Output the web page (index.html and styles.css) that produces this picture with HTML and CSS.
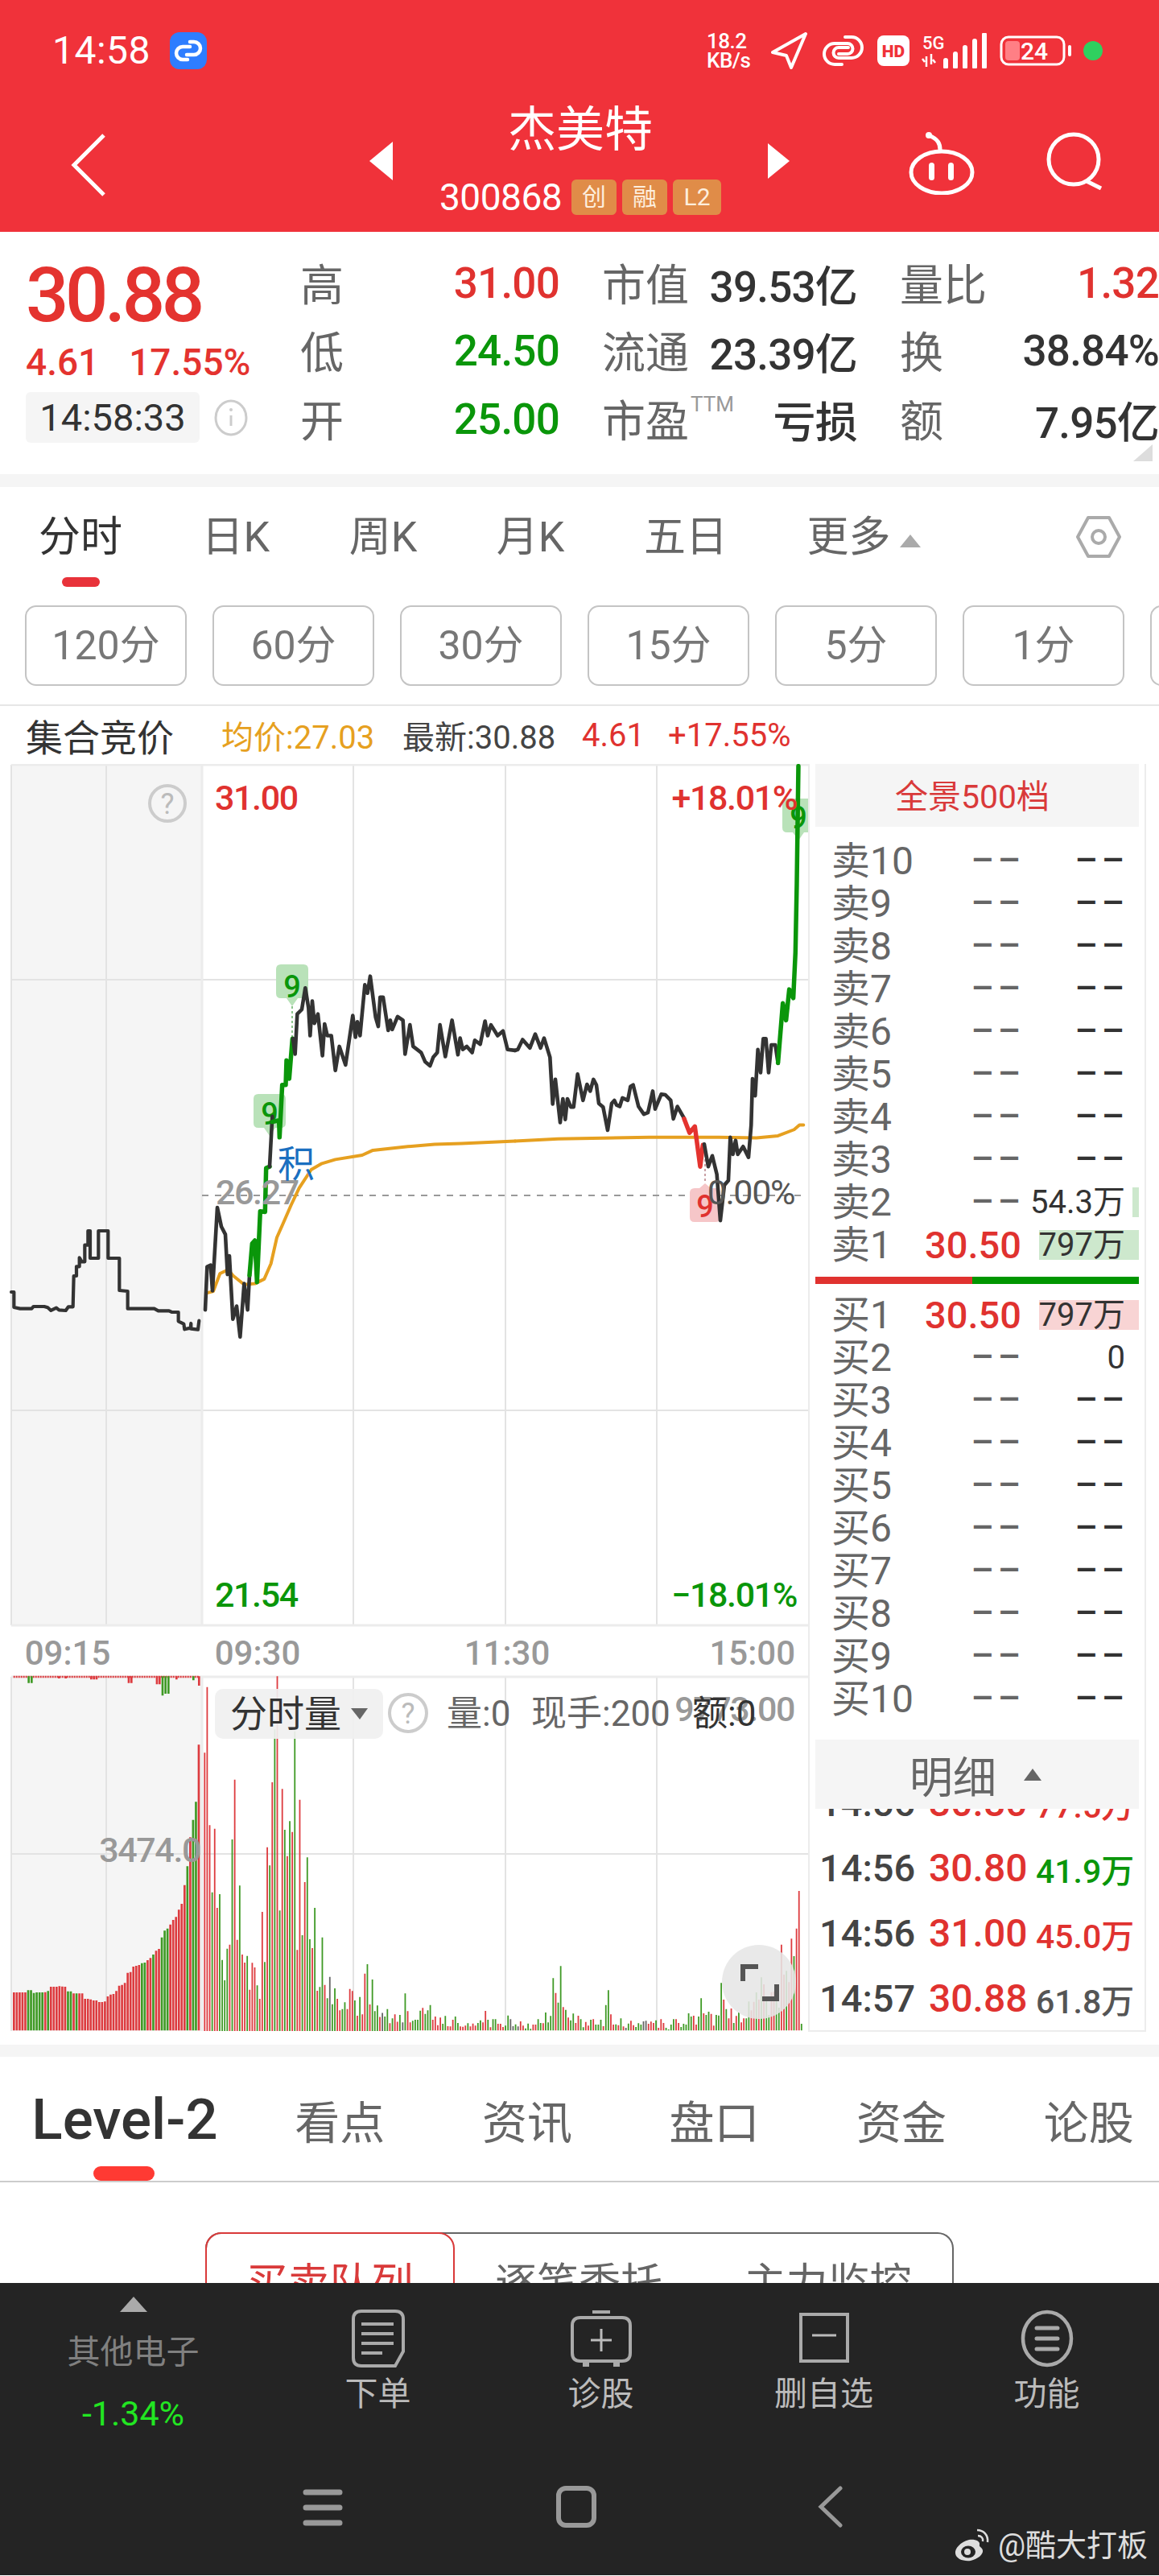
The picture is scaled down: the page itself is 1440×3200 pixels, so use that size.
FILE: index.html
```html
<!DOCTYPE html>
<html lang="zh-CN">
<head>
<meta charset="utf-8">
<title>杰美特 300868</title>
<link rel="stylesheet" href="styles.css">
</head>
<body>
<div class="page">
  <header class="header">
    <div class="status">
      <span class="clock">14:58</span>
      <svg class="notif" width="46" height="46" viewBox="0 0 46 46"><rect width="46" height="46" rx="12" fill="#2e7dff"/><path d="M25 12h5a8 8 0 0 1 0 16h-9M22 34h-6a8 8 0 0 1 0-16h9" fill="none" stroke="#fff" stroke-width="4.5" stroke-linecap="round"/></svg>
      <div class="status-right">
        <div class="speed"><span>18.2</span><span>KB/s</span></div>
        <svg width="48" height="46" viewBox="0 0 48 46"><path d="M44 2 3 25l17 4 6 15z" fill="none" stroke="#fff" stroke-width="4" stroke-linejoin="round"/></svg>
        <svg width="55" height="42" viewBox="0 0 55 42"><path d="M30 4h8a13 13 0 0 1 0 26H22a6 6 0 0 1 0-13h12M26 38h-9a13 13 0 0 1 0-26h16a6 6 0 0 1 0 13H22" fill="none" stroke="#fff" stroke-width="4" stroke-linecap="round"/></svg>
        <svg width="40" height="38" viewBox="0 0 40 38"><rect width="40" height="38" rx="8" fill="#fff"/><text x="20" y="27" class="hd-text">HD</text></svg>
        <svg width="82" height="44" viewBox="0 0 82 44"><text x="1" y="20" class="net-text">5G</text><path d="M6 29v13M4 36l-3-4M12 26v13M14 33l3 4" fill="none" stroke="#fff" stroke-width="2.5"/><path d="M26 42v-8M38 42V26M50 42V18M62 42V10M74 42V2" stroke="#fff" stroke-width="6" stroke-linecap="round" transform="translate(4 0)"/></svg>
        <svg width="93" height="38" viewBox="0 0 93 38"><rect x="2" y="2" width="78" height="34" rx="9" fill="none" stroke="#fff" stroke-width="3"/><rect x="7" y="7" width="18" height="24" rx="4" fill="#ff7f85"/><text x="43" y="30" class="bat-text">24</text><rect x="85" y="12" width="4" height="14" rx="2" fill="#fff"/></svg>
        <span class="dot"></span>
      </div>
    </div>
    <nav class="nav">
      <svg class="nav-back" width="44" height="78" viewBox="0 0 44 78"><path d="M41 2 4 39l37 37" fill="none" stroke="#fff" stroke-width="5" stroke-linejoin="miter"/></svg>
      <div class="nav-center">
        <span class="tri-left"></span>
        <div class="nav-title">
          <div class="name">杰美特</div>
          <div class="code-row"><span class="code">300868</span><span class="tag">创</span><span class="tag">融</span><span class="tag tag-wide">L2</span></div>
        </div>
        <span class="tri-right"></span>
      </div>
      <div class="nav-actions">
        <svg width="84" height="78" viewBox="0 0 84 78"><ellipse cx="42" cy="50" rx="38" ry="26" fill="none" stroke="#fff" stroke-width="5"/><path d="M40 22c0-7-2-13-14-18" fill="none" stroke="#fff" stroke-width="5" stroke-linecap="round"/><circle cx="26" cy="4" r="4" fill="#fff"/><rect x="26" y="38" width="7" height="22" rx="3.5" fill="#fff"/><rect x="50" y="38" width="7" height="22" rx="3.5" fill="#fff"/></svg>
        <svg width="70" height="72" viewBox="0 0 70 72"><circle cx="34" cy="34" r="31" fill="none" stroke="#fff" stroke-width="5"/><path d="M50 61l18 9" fill="none" stroke="#fff" stroke-width="5"/></svg>
      </div>
    </nav>
  </header>

  <section class="quote">
    <div class="quote-main">
      <div class="price">30.88</div>
      <div class="change"><span>4.61</span><span>17.55%</span></div>
      <div class="time-row"><span class="time-chip">14:58:33</span>
        <svg width="42" height="46" viewBox="0 0 42 46"><ellipse cx="21" cy="23" rx="19" ry="21" fill="none" stroke="#ccc" stroke-width="3"/><path d="M21 20v13" stroke="#ccc" stroke-width="3"/><circle cx="21" cy="13" r="2" fill="#ccc"/></svg>
      </div>
    </div>
    <div class="quote-grid">
      <div class="cell"><span class="lb">高</span><span class="v up">31.00</span></div>
      <div class="cell"><span class="lb">市值</span><span class="v dk">39.53亿</span></div>
      <div class="cell"><span class="lb">量比</span><span class="v up">1.32</span></div>
      <div class="cell"><span class="lb">低</span><span class="v dn">24.50</span></div>
      <div class="cell"><span class="lb">流通</span><span class="v dk">23.39亿</span></div>
      <div class="cell"><span class="lb">换</span><span class="v dk">38.84%</span></div>
      <div class="cell"><span class="lb">开</span><span class="v dn">25.00</span></div>
      <div class="cell"><span class="lb">市盈<sup class="ttm">TTM</sup></span><span class="v dk">亏损</span></div>
      <div class="cell"><span class="lb">额</span><span class="v dk">7.95亿</span></div>
    </div>
    <span class="corner"></span>
  </section>
  <div class="gap-bar"></div>

  <section class="period">
    <div class="period-tabs">
      <span class="ptab active">分时</span><span class="ptab">日K</span><span class="ptab">周K</span><span class="ptab">月K</span><span class="ptab">五日</span><span class="ptab">更多<i class="up-tri"></i></span>
      <svg class="hex" width="56" height="54" viewBox="0 0 56 54"><path d="M15 3h26l13 24-13 24H15L2 27z" fill="none" stroke="#aaa" stroke-width="4" stroke-linejoin="round"/><circle cx="28" cy="27" r="8" fill="none" stroke="#aaa" stroke-width="4"/></svg>
    </div>
    <div class="min-btns">
      <span class="mbtn">120分</span><span class="mbtn">60分</span><span class="mbtn">30分</span><span class="mbtn">15分</span><span class="mbtn">5分</span><span class="mbtn">1分</span><span class="mbtn"></span>
    </div>
  </section>

  <div class="info-line">
    <span class="il-title">集合竞价</span>
    <span class="il-avg">均价:27.03</span>
    <span class="il-new">最新:30.88</span>
    <span class="il-up il-a">4.61</span>
    <span class="il-up il-b">+17.55%</span>
  </div>

  <section class="market">
    <svg class="chart" width="1004" height="1580" viewBox="0 950 1004 1580">
      <rect x="14" y="951" width="237" height="1069" fill="#f5f5f5"/>
      <rect x="14" y="2084" width="237" height="440" fill="#f5f5f5"/>
      <path class="grid" d="M14 1218H1004M14 1753H1004M14 2304H1004M132 951V2020M439 951V2020M628 951V2020M816 951V2020M132 2084V2524M439 2084V2524M628 2084V2524M816 2084V2524M14 951V2020M14 2084V2524"/>
      <path class="grid-strong" d="M14 951H1004M14 2020H1004M14 2084H1004M251 951V2020M251 2084V2524"/>
      <path class="dash" d="M251 1486H1000"/>

      <path class="tag-g" d="M349 1199h28q6 0 6 6v30q0 6-6 6h-7l-7 10-7-10h-7q-6 0-6-6v-30q0-6 6-6z"/>
      <path class="tag-g" d="M321 1360h28q6 0 6 6v30q0 6-6 6h-7l-7 10-7-10h-7q-6 0-6-6v-30q0-6 6-6z"/>
      <path class="tag-g" d="M978 993h28q6 0 6 6v30q0 6-6 6h-7l-7 10-7-10h-7q-6 0-6-6v-30q0-6 6-6z"/>
      <path class="tag-r" d="M863 1519h26q6 0 6-6v-30q0-6-6-6h-6l-7-6-7 6h-6q-6 0-6 6v30q0 6 6 6z"/>
      <path class="dots-g" d="M363 1251V1292"/>
      <path class="dots-r" d="M876 1429V1471"/>
      <text x="363" y="1240" class="nine g">9</text>
      <text x="335" y="1398" class="nine g">9</text>
      <text x="992" y="1030" class="nine g">9</text>
      <text x="876" y="1513" class="nine r">9</text>

      <g transform="translate(0 1480) scale(.3333)">
        <polyline class="ln blk th" points="42,378 52,378 52,435 75,440 118,440 125,432 165,432 178,436 190,447 210,437 220,445 245,447 255,433 272,433 275,318 285,318 285,283 296,283 296,250 305,265 316,265 316,203 328,203 328,150 336,150 336,252 367,252 367,150 403,150 403,252 445,252 445,372 476,375 476,440 575,440 590,448 630,448 640,453 665,453 665,487 685,497 688,517 710,512 712,495 712,515 738,518 742,485"/>
      </g>
      <g transform="translate(240 1100) scale(.3333 .3827)">
        <polyline class="ln org" points="52,1325 75,1320 100,1262 130,1250 150,1270 190,1298 230,1295 265,1280 290,1230 312,1145 335,1100 365,1040 395,985 440,925 480,905 530,892 630,878 670,862 800,850 900,843 1000,840 1200,832"/>
        <polyline class="ln blk" points="45,1380 52,1240 65,1235 72,1318 90,1048 105,1110 120,1135 128,1265 135,1205 148,1410 162,1368 175,1468 190,1295 203,1380 210,1268"/>
        <polyline class="ln grn" points="210,1268 220,1165 230,1155 238,1290 250,1060 268,1062 272,920 285,915"/>
        <polyline class="ln blk" points="285,915 295,752"/>
        <polyline class="ln grn" points="295,770 320,765 322,820 332,650 345,650 348,570 358,630 370,500"/>
        <polyline class="ln blk" points="372,500 380,550 388,420 405,405 418,335 430,400 436,490 444,378 452,450 465,420 482,555 490,452 500,490 515,490 530,603 545,525 568,585 595,425 605,495 612,445 622,490 640,325 650,352 660,297 680,430 690,460 697,365 708,365 727,473 735,440 742,470 762,428 782,440 790,550 808,455 820,525 850,545 865,575 883,588 895,560 910,545 920,455 940,558 965,440 987,552 995,498 1005,535 1020,525 1040,545 1050,505 1070,518 1088,443 1098,490 1110,455 1135,490 1155,475 1172,535 1200,538"/>
      </g>
      <g transform="translate(640 1100) scale(.3333 .3827)">
        <polyline class="ln org" points="0,832 160,825 500,820 760,820 900,822 980,815 1040,795 1060,780 1075,780"/>
        <polyline class="ln blk" points="0,538 10,535 28,503 55,530 75,485 95,530 108,498 130,560 140,712 150,632 168,772 178,695 187,762 195,695 208,722 218,722 233,615 253,700 268,648 280,670 292,632 303,650 312,710 328,722 345,797 360,710 370,700 378,715 390,720 400,692 420,700 430,655 440,650 460,720 480,745 495,740 513,670 522,728 545,680 560,682 580,700 590,760 605,720 630,758"/>
        <polyline class="ln red" points="630,760 650,805 670,785 690,915 700,845"/>
        <polyline class="ln blk" points="705,842 720,915 735,880 752,940 765,1090 780,975 795,960 802,820 812,875 822,830 830,875 850,850 870,885 880,780 885,630 895,685 905,535 915,610 925,500 935,500 945,610 955,520 970,520 980,580"/>
        <polyline class="ln grn" points="980,578 998,385 1010,440 1022,340 1037,368 1045,220 1050,0 1056,-385"/>
      </g>

      <text x="267" y="1007" class="lbl up">31.00</text>
      <text x="990" y="1007" class="lbl up end">+18.01%</text>
      <text x="267" y="1997" class="lbl dn">21.54</text>
      <text x="990" y="1997" class="lbl dn end">−18.01%</text>
      <text x="268" y="1497" class="lbl mute">26.27</text>
      <text x="987" y="1497" class="lbl mid end">0.00%</text>
      <text x="345" y="1463" class="ji">积</text>
      <ellipse cx="208" cy="999" rx="22" ry="22" class="q"/>
      <text x="208" y="1012" class="q-text">?</text>

      <text x="84" y="2069" class="tm mid-a">09:15</text>
      <text x="320" y="2069" class="tm mid-a">09:30</text>
      <text x="630" y="2069" class="tm mid-a">11:30</text>
      <text x="988" y="2069" class="tm end">15:00</text>

      <g id="bars-a" transform="translate(10 2080) scale(.3333)">
        <path class="hang-r" d="M20 12H710" stroke-dasharray="6 3"/>
        <path class="hang-r" d="M190 10V18M215 10V18M310 10V22M320 10V22M330 10V22M450 10V35M460 10V35M555 10V40M565 10V40M628 10V22M712 10V45"/>
        <path class="hang-g" d="M77 10V35M88 10V35M576 10V82M587 10V75M598 10V75M691 10V25"/>
      </g>
      <g id="bars-b" transform="translate(500 2300) scale(.3333)"></g>

      <text x="987" y="2139" class="lbl mute end">9773.00</text>
      <text x="249" y="2314" class="lbl mute end">3474.0</text>
      <rect x="267" y="2099" width="209" height="62" rx="10" class="vol-chip"/>
      <text x="286" y="2146" class="vol-title">分时量</text>
      <path d="M436 2123h21l-10 14z" fill="#666"/>
      <ellipse cx="507" cy="2129" rx="23" ry="23" class="q"/>
      <text x="507" y="2142" class="q-text">?</text>
      <text x="555" y="2145" class="vol-info">量:0</text>
      <text x="660" y="2145" class="vol-info">现手:200</text>
      <text x="860" y="2145" class="vol-info dk">额:0</text>
      <circle cx="943" cy="2463" r="46" class="fs"/>
      <path class="fs-ic" d="M923 2462v-18h19M965 2466v18h-18"/>
    </svg>

    <aside class="book">
      <div class="book-head">全景500档</div>
      <div class="book-rows">
        <div class="row"><span class="rl">卖10</span><span class="rp">––</span><span class="rv dash-v">––</span></div>
        <div class="row"><span class="rl">卖9</span><span class="rp">––</span><span class="rv dash-v">––</span></div>
        <div class="row"><span class="rl">卖8</span><span class="rp">––</span><span class="rv dash-v">––</span></div>
        <div class="row"><span class="rl">卖7</span><span class="rp">––</span><span class="rv dash-v">––</span></div>
        <div class="row"><span class="rl">卖6</span><span class="rp">––</span><span class="rv dash-v">––</span></div>
        <div class="row"><span class="rl">卖5</span><span class="rp">––</span><span class="rv dash-v">––</span></div>
        <div class="row"><span class="rl">卖4</span><span class="rp">––</span><span class="rv dash-v">––</span></div>
        <div class="row"><span class="rl">卖3</span><span class="rp">––</span><span class="rv dash-v">––</span></div>
        <div class="row"><i class="depth ask" style="width:8px"></i><span class="rl">卖2</span><span class="rp">––</span><span class="rv">54.3万</span></div>
        <div class="row"><i class="depth ask" style="width:124px"></i><span class="rl">卖1</span><span class="rp price-v">30.50</span><span class="rv">797万</span></div>
      </div>
      <div class="ratio"><i class="ratio-r"></i><i class="ratio-g"></i></div>
      <div class="book-rows buys">
        <div class="row"><i class="depth bid" style="width:124px"></i><span class="rl">买1</span><span class="rp price-v">30.50</span><span class="rv">797万</span></div>
        <div class="row"><span class="rl">买2</span><span class="rp">––</span><span class="rv">0</span></div>
        <div class="row"><span class="rl">买3</span><span class="rp">––</span><span class="rv dash-v">––</span></div>
        <div class="row"><span class="rl">买4</span><span class="rp">––</span><span class="rv dash-v">––</span></div>
        <div class="row"><span class="rl">买5</span><span class="rp">––</span><span class="rv dash-v">––</span></div>
        <div class="row"><span class="rl">买6</span><span class="rp">––</span><span class="rv dash-v">––</span></div>
        <div class="row"><span class="rl">买7</span><span class="rp">––</span><span class="rv dash-v">––</span></div>
        <div class="row"><span class="rl">买8</span><span class="rp">––</span><span class="rv dash-v">––</span></div>
        <div class="row"><span class="rl">买9</span><span class="rp">––</span><span class="rv dash-v">––</span></div>
        <div class="row"><span class="rl">买10</span><span class="rp">––</span><span class="rv dash-v">––</span></div>
      </div>
      <div class="detail-head"><span>明细</span><i class="detail-tri"></i></div>
      <div class="details">
        <div class="drow"><span class="dt">14:56</span><span class="dp">30.80</span><span class="dv up">77.5万</span></div>
        <div class="drow"><span class="dt">14:56</span><span class="dp">30.80</span><span class="dv dn">41.9万</span></div>
        <div class="drow"><span class="dt">14:56</span><span class="dp">31.00</span><span class="dv up">45.0万</span></div>
        <div class="drow"><span class="dt">14:57</span><span class="dp">30.88</span><span class="dv gr">61.8万</span></div>
      </div>
    </aside>
  </section>
  <div class="gap-bar gap-low"></div>

  <div class="bottom-tabs">
    <span class="btab lead">Level-2</span><span class="btab">看点</span><span class="btab">资讯</span><span class="btab">盘口</span><span class="btab">资金</span><span class="btab">论股</span>
  </div>
  <div class="seg-wrap">
    <div class="seg">
      <span class="seg-item on">买卖队列</span><span class="seg-item">逐笔委托</span><span class="seg-item">主力监控</span>
    </div>
  </div>

  <footer class="footer">
    <div class="actions">
      <div class="sector"><i class="sector-tri"></i><span class="sector-name">其他电子</span><span class="sector-pct">-1.34%</span></div>
      <div class="act">
        <svg width="66" height="72" viewBox="0 0 66 72"><path d="M12 2h42q10 0 10 10v40l-10 18H12Q2 70 2 60V12Q2 2 12 2z" fill="none" stroke="#aaa" stroke-width="4"/><path d="M12 18h40M12 30h40M12 42h40M12 54h26" stroke="#aaa" stroke-width="4"/></svg>
        <span>下单</span></div>
      <div class="act">
        <svg width="78" height="72" viewBox="0 0 78 72"><path d="M28 3h22M13 10h52q10 0 10 10v34q0 10-10 10H13Q3 64 3 54V20q0-10 10-10z" fill="none" stroke="#aaa" stroke-width="4"/><path d="M39 24v28M26 38h26" stroke="#bbb" stroke-width="3"/><path d="M16 66h8v5h-8zM54 66h8v5h-8z" fill="#aaa"/></svg>
        <span>诊股</span></div>
      <div class="act">
        <svg width="62" height="72" viewBox="0 0 62 72"><rect x="2" y="6" width="58" height="58" fill="none" stroke="#aaa" stroke-width="4"/><path d="M16 32h30" stroke="#bbb" stroke-width="3"/></svg>
        <span>删自选</span></div>
      <div class="act">
        <svg width="66" height="72" viewBox="0 0 66 72"><ellipse cx="33" cy="36" rx="30" ry="33" fill="none" stroke="#aaa" stroke-width="4.5"/><path d="M20 23h26M20 36h26M20 49h26" stroke="#aaa" stroke-width="5" stroke-linecap="round"/></svg>
        <span>功能</span></div>
    </div>
    <div class="sys-nav">
      <svg width="50" height="52" viewBox="0 0 50 52"><path d="M4 8h42M4 27h42M4 46h42" stroke="#999" stroke-width="7" stroke-linecap="round"/></svg>
      <svg width="52" height="52" viewBox="0 0 52 52"><rect x="4" y="3" width="44" height="46" rx="9" fill="none" stroke="#999" stroke-width="6"/></svg>
      <svg width="50" height="52" viewBox="0 0 50 52"><path d="M38 3 14 26l24 23" fill="none" stroke="#999" stroke-width="5" stroke-linecap="round"/></svg>
    </div>
    <div class="mark">
      <svg width="48" height="42" viewBox="0 0 48 42"><path d="M20 14C9 17 2 25 3 31c1 7 10 10 19 9 9-2 16-8 15-13-1-4-5-4-4-7 1-4-5-7-13-6z" fill="#ddd"/><ellipse cx="19" cy="29" rx="9" ry="7.5" fill="#242424"/><circle cx="18" cy="29" r="4" fill="#ddd"/><path d="M30 2c8 0 14 6 13 15M31 9c4 0 7 3 6 7" fill="none" stroke="#ddd" stroke-width="2.5"/></svg>
      <span>@酷大打板</span>
    </div>
  </footer>
</div>
<script src="script.js"></script>
</body>
</html>
```
FILE: styles.css
```css
* { box-sizing: border-box; }
html, body { margin: 0; padding: 0; background: #fff; }
body { font-family: Roboto, "Noto Sans CJK SC", sans-serif; color: #333; }
i { display: block; font-style: normal; }
.page { width: 1440px; height: 3200px; overflow: hidden; position: relative; }

.header { height: 288px; background: #f0323a; color: #fff; }
.status { height: 122px; padding: 40px 70px 0 65px; display: flex; align-items: flex-start; }
.clock { font-size: 48px; line-height: 46px; letter-spacing: .5px; }
.notif { margin-left: 24px; }
.status-right { margin-left: auto; display: flex; align-items: center; height: 46px; }
.speed { width: 64px; display: flex; flex-direction: column; font-size: 26px; line-height: 24px; font-weight: 500; white-space: nowrap; letter-spacing: -.5px; }
.status-right svg { margin-left: 15px; flex: none; }
.hd-text { font-size: 21px; font-weight: 900; fill: #f0323a; text-anchor: middle; }
.net-text { font-size: 22px; font-weight: 500; fill: #fff; }
.bat-text { font-size: 30px; fill: #fff; text-anchor: middle; font-weight: 500; }
.dot { width: 24px; height: 24px; border-radius: 50%; background: #2fd05f; margin-left: 11px; flex: none; }

.nav { height: 166px; padding: 10px 70px 0; display: grid; grid-template-columns: 1fr auto 1fr; align-items: start; }
.nav-back { margin: 34px 0 0 18px; }
.nav-center { display: flex; align-items: center; gap: 58px; }
.tri-left { width: 0; height: 0; border: solid transparent; border-width: 24px 29px 24px 0; border-right-color: #fff; }
.tri-right { width: 0; height: 0; border: solid transparent; border-width: 22px 0 22px 27px; border-left-color: #fff; }
.nav-title { width: 350px; text-align: center; }
.name { font-size: 60px; line-height: 60px; }
.code-row { margin-top: 31px; height: 44px; display: flex; align-items: center; gap: 7px; }
.code { font-size: 46px; line-height: 44px; width: 157px; text-align: left; letter-spacing: -.5px; }
.tag { width: 56px; height: 44px; border-radius: 6px; background: #e08c48; color: #fdeedd; font-size: 30px; line-height: 44px; text-align: center; }
.tag-wide { width: 60px; }
.nav-actions { display: flex; justify-content: flex-end; align-items: flex-start; gap: 88px; margin-top: 32px; }

.quote { height: 301px; display: flex; position: relative; }
.quote-main { width: 373px; padding: 36px 0 0 32px; flex: none; }
.price { font-size: 94px; line-height: 86px; font-weight: 500; letter-spacing: -4.4px; color: #e4332f; }
.change { margin-top: 18px; display: flex; gap: 37px; font-size: 46px; line-height: 44px; color: #e4332f; font-weight: 500; }
.time-row { margin-top: 15px; display: flex; align-items: center; gap: 18px; }
.time-chip { width: 216px; height: 63px; background: #f5f5f5; border-radius: 6px; font-size: 47px; line-height: 63px; text-align: center; color: #333; }
.quote-grid { flex: 1; padding-top: 20px; display: grid; grid-template-columns: 322px 317px 322px; column-gap: 53px; grid-auto-rows: 84.5px; }
.cell { display: flex; justify-content: space-between; align-items: center; white-space: nowrap; }
.lb { font-size: 54px; color: #666; position: relative; }
.ttm { font-size: 26px; vertical-align: top; line-height: 44px; color: #999; margin-left: 2px; }
.v { font-size: 53px; font-weight: 500; letter-spacing: -.8px; padding-top: 3px; }
.up { color: #e0322f; fill: #e0322f; }
.dn { color: #0a960a; fill: #0a960a; }
.dk { color: #333; fill: #333; }
.gr { color: #555; }
.corner { position: absolute; right: 8px; bottom: 16px; width: 0; height: 0; border: solid transparent; border-width: 0 0 21px 24px; border-bottom-color: #ddd; }
.gap-bar { height: 16px; background: #f5f5f5; }
.gap-low { height: 15px; margin-top: 11px; }

.period-tabs { height: 147px; padding-left: 48px; display: flex; align-items: flex-start; gap: 98.5px; position: relative; }
.ptab { font-size: 52px; line-height: 60px; margin-top: 33px; color: #666; position: relative; display: flex; align-items: center; white-space: nowrap; }
.ptab.active { color: #333; }
.ptab.active::after { content: ""; position: absolute; left: 29px; top: 79px; width: 47px; height: 12px; border-radius: 6px; background: #e8323a; }
.up-tri { margin-left: 12px; margin-top: 8px; width: 0; height: 0; border: solid transparent; border-width: 0 13px 16px; border-bottom-color: #aaa; }
.hex { position: absolute; right: 47px; top: 35px; }
.min-btns { display: flex; gap: 32px; padding-left: 31px; height: 125px; overflow: hidden; border-bottom: 2px solid #e6e6e6; }
.mbtn { flex: none; width: 201px; height: 100px; border: 2px solid #c4c4c4; border-radius: 14px; font-size: 50px; line-height: 96px; color: #777; text-align: center; }

.info-line { height: 72px; padding-left: 32px; display: flex; align-items: center; white-space: nowrap; font-size: 40px; }
.il-title { font-size: 46px; width: 243px; color: #333; }
.il-avg { color: #e6a020; width: 225px; }
.il-new { color: #444; width: 223px; }
.il-up { color: #e0322f; }
.il-a { width: 107px; }

.market { display: flex; height: 1580px; align-items: flex-start; }
.chart { flex: none; display: block; }
.grid { stroke: #e3e3e3; stroke-width: 2; fill: none; }
.grid-strong { stroke: #ececec; stroke-width: 3; fill: none; }
.dash { stroke: #999; stroke-width: 2; stroke-dasharray: 8 8; fill: none; }
.tag-g { fill: #b9e2b9; }
.tag-r { fill: #f6c6c8; }
.dots-g { stroke: #8cc48c; stroke-width: 2; stroke-dasharray: 3 3; }
.dots-r { stroke: #c9a0a4; stroke-width: 2; stroke-dasharray: 3 3; }
.nine { font-size: 38px; font-weight: 500; text-anchor: middle; }
.nine.g { fill: #0a960a; }
.nine.r { fill: #e0322f; }
.ln { fill: none; vector-effect: non-scaling-stroke; stroke-linejoin: round; stroke-linecap: round; stroke-width: 4.6; }
.blk { stroke: #333; }
.th { stroke-width: 4.2; }
.grn { stroke: #0a960a; stroke-width: 5.5; }
.red { stroke: #e4332f; stroke-width: 5.5; }
.org { stroke: #e6a020; stroke-width: 4; }
.lbl { font-size: 43px; font-weight: 500; letter-spacing: -1.4px; }
.end { text-anchor: end; }
.mute { fill: #999; }
.mid { fill: #555; font-weight: 400; }
.ji { font-size: 46px; fill: #1a6fc0; }
.q { fill: none; stroke: #ccc; stroke-width: 4; }
.q-text { font-size: 36px; fill: #bbb; text-anchor: middle; }
.tm { font-size: 42px; font-weight: 500; fill: #999; }
.mid-a { text-anchor: middle; }
.hang-r { stroke: #dd3b3f; stroke-width: 8; fill: none; }
.hang-g { stroke: #3f9a25; stroke-width: 8; fill: none; }
.vol-chip { fill: #f0f0f0; fill-opacity: .92; }
.vol-title { font-size: 46px; fill: #333; }
.vol-info { font-size: 44px; fill: #666; }
.vol-info.dk { fill: #333; }
.fs { fill: #e6e6e6; fill-opacity: .88; }
.fs-ic { fill: none; stroke: #555; stroke-width: 6; }

.book { width: 420px; height: 1575px; flex: none; padding: 0 7px; border: solid #ececec; border-width: 0 2px 2px; }
.book-head { height: 78px; background: #f5f5f5; color: #d93a3a; font-size: 41px; line-height: 82px; text-align: center; padding-right: 12px; }
.book-rows { padding-top: 15.5px; }
.book-rows.buys { padding-top: 11.5px; }
.row { height: 53px; line-height: 53px; position: relative; display: grid; grid-template-columns: 112px 124px 129px; grid-template-rows: 53px; padding-left: 20px; white-space: nowrap; }
.rl { font-size: 48px; color: #666; position: relative; }
.rp { font-size: 44px; font-weight: 500; color: #666; text-align: right; position: relative; letter-spacing: 5px; margin-right: -4px; }
.price-v { font-size: 47px; color: #e0322f; font-weight: 500; letter-spacing: 0; margin-right: 0; }
.rv { font-size: 40px; color: #333; text-align: right; position: relative; }
.dash-v { font-size: 44px; font-weight: 500; letter-spacing: 5px; margin-right: -4px; }
.depth { position: absolute; right: 0; top: 8px; height: 37px; }
.ask { background: #cde8cd; }
.bid { background: #f8d4d4; }
.ratio { margin-top: 13.5px; display: flex; height: 9px; }
.ratio-r { width: 195px; background: #e0322f; }
.ratio-g { flex: 1; background: #009600; }
.detail-head { margin-top: 24.5px; height: 86px; background: #f5f5f5; display: flex; align-items: center; padding-left: 117px; font-size: 54px; color: #666; position: relative; z-index: 1; }
.detail-tri { margin-left: 34px; width: 0; height: 0; border: solid transparent; border-width: 0 11px 15px; border-bottom-color: #666; }
.details { height: 276px; overflow: hidden; display: flex; flex-direction: column; justify-content: flex-end; }
.drow { height: 81px; flex: none; display: grid; grid-template-columns: 136px 133px auto; padding-left: 5px; align-items: center; white-space: nowrap; }
.dt { font-size: 47px; font-weight: 500; color: #444; }
.dp { font-size: 48px; font-weight: 500; color: #e0322f; }
.dv { font-size: 41px; font-weight: 500; }

.bottom-tabs { height: 156px; border-bottom: 2px solid #ccc; display: grid; grid-template-columns: 306px repeat(5, 232.6px); align-items: center; position: relative; }
.btab { font-size: 56px; color: #666; text-align: center; }
.btab.lead { font-size: 71px; font-weight: 500; color: #333; padding-left: 4px; }
.btab.lead::after { content: ""; position: absolute; left: 116px; bottom: 0; width: 76px; height: 18px; border-radius: 9px; background: #ff3a33; }
.seg-wrap { height: 125px; padding: 62px 0 0 255px; overflow: hidden; }
.seg { width: 930px; height: 120px; border: 2.5px solid #666; border-bottom: 0; border-radius: 20px 20px 0 0; display: flex; position: relative; }
.seg-item { font-size: 52px; line-height: 52px; padding-top: 37px; color: #666; width: 311px; text-align: center; }
.seg-item.on { color: #d93a3a; border: 2.5px solid #d93a3a; border-radius: 20px 20px 0 0; margin: -2.5px 0 0 -2.5px; width: 312px; }

.footer { height: 363px; background: #242424; position: relative; }
.actions { height: 200px; display: grid; grid-template-columns: 331px repeat(4, 277px); }
.sector { display: flex; flex-direction: column; align-items: center; padding-top: 17px; }
.sector-tri { width: 0; height: 0; border: solid transparent; border-width: 0 17px 19px; border-bottom-color: #aaa; }
.sector-name { margin-top: 25px; font-size: 41px; line-height: 50px; color: #808080; }
.sector-pct { margin-top: 26px; font-size: 43px; line-height: 50px; color: #22e622; }
.act { display: flex; flex-direction: column; align-items: center; padding-top: 33px; font-size: 41px; line-height: 46px; color: #bbb; gap: 10px; }
.sys-nav { display: flex; justify-content: center; gap: 264px; padding: 52px 8px 0 0; }
.mark { position: absolute; right: 14px; bottom: 16px; display: flex; align-items: center; gap: 8px; color: #ddd; font-size: 38px; line-height: 42px; }
```
FILE: script.js
```js
var SVG_NS = "http://www.w3.org/2000/svg";
var COLORS = { r: "#dd3b3f", g: "#3f9a25", k: "#666666" };

function addBars(group, tokens, startX, pitch, base, width) {
  var paths = { r: "", g: "", k: "" };
  tokens.trim().split(/\s+/).forEach(function (tok, i) {
    var x = startX + i * pitch;
    paths[tok[0]] += "M" + x.toFixed(1) + " " + base + "V" + tok.slice(1);
  });
  Object.keys(paths).forEach(function (c) {
    var p = document.createElementNS(SVG_NS, "path");
    p.setAttribute("d", paths[c]);
    p.setAttribute("stroke", COLORS[c]);
    p.setAttribute("stroke-width", width);
    p.setAttribute("fill", "none");
    group.appendChild(p);
  });
}

var pre = "r1188 r1188 r1188 r1188 r1188 g1180 g1180 g1190 g1188 g1188 g1188 r1187 g1183 r1167 r1167 r1167 r1165 r1166 r1167 g1184 g1184 r1192 g1192 r1192 r1192 r1212 r1212 r1214 r1218 r1218 r1224 r1224 r1222 r1203 r1196 r1194 r1183 r1163 r1160 r1153 r1115 r1112 r1092 r1089 r1086 g1079 g1077 r1068 r1060 g1047 r1033 r1026 g983 g958 g950 r935 r918 r907 r880 r858 r788 g718 r610 g545 g478 r265";
var open1 = "r295 r50 r565 g815 r578 r873 g822 g1067 g1143 g1025 r1010 g618 r395 r992 g790 r1047 r1077 g1052 r1178 r1078 r1095 g1162 r1212 r888 g1075 r647 g715 r405 g208 r10 g883 r430 g582 r680 g550 r590 g215 r1030 r470 g975 r777 g685 g990 r1023 g873 r1182 g1168 g983 r1160 g1210 k1130 g1232 g1173 r1212 r1255 g1250 g1225 r1250 r1175 r1183 g1218 r1275 g1205 r1270 r1118 g1083 r1233 g1140 g1258 g1237 r1280 k1265 g1278 g1250 r1303 g1285 r1270 r1298 g1272";
var open2 = "k640 g532 r598 r640 g634 g630 g630 g596 r586 g608 g595 g575 r630 r618 r650 r622 g645 g616 r654 r655 r630 g618 g642 r655 r656 r652 g643 r655 r644 r652 g642 g632 r640 r597 g630 r658 g628 g628 r645 r645 r657 g652 g614 k628 k654 g647 k655 r636 r652 g662 g644 g664 r648 r648 g628 g642 r643 g603 g640 g616 g475 r530 g566 g430 r583 g593 r622 g632 g607 r642 r615 g628 g658 r638 r652 g630 r628 g648 g648 g630 r654 g575 g520 r610 r648 g647 r650 g625 r655 k660 g644 r634 r650 g657 g643 g648 k636 k634 r645 r637 r642 g632 r660 r628 r642 g660 g666 g648 g628 r628 r642 g657 g645 g648 g606 g618 r615 r648 g618 g550 r606 g612 g600 r608 r652 g612 g614 g493 r555 g590 r625 r588 g642 r616 g603 r640 r625 g625 g562 r595 r563 g528 r555 g472 r498 g553 g612 r527 r525 g552 g585 r350 r462 g448 r490 r328 g393 r290 r150 g645";

var groupA = document.getElementById("bars-a");
var groupB = document.getElementById("bars-b");
addBars(groupA, pre, 22, 10.6, 1330, 8);
addBars(groupA, open1, 733, 9.33, 1332, 5.4);
addBars(groupB, open2, 1, 9.35, 670, 5.4);
```
